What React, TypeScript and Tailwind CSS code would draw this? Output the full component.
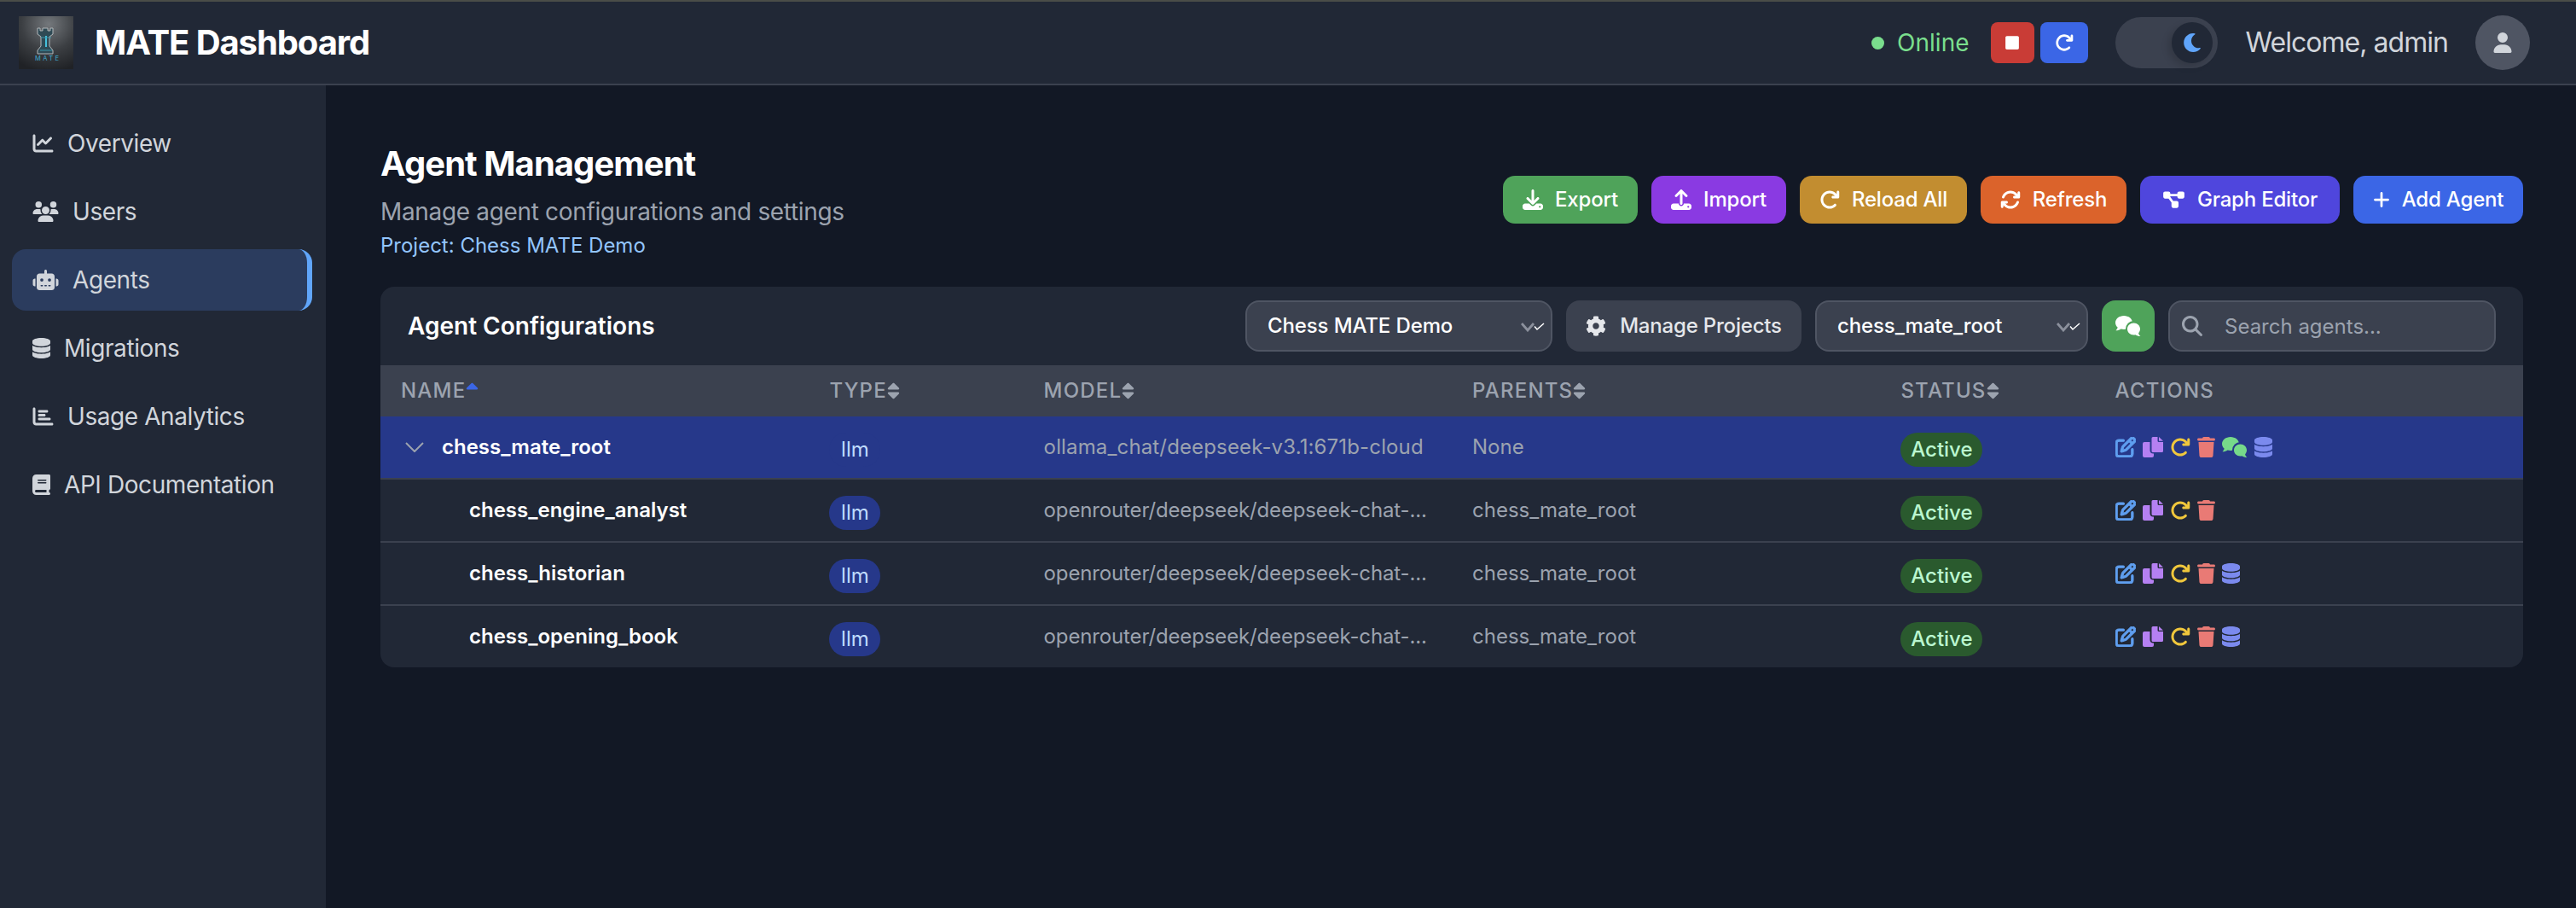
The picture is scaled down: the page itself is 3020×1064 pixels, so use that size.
import React from 'react'
import { FaCog, FaMoon, FaSort, FaSortUp, FaStop } from 'react-icons/fa'
import {
  FaChartLine, FaUsers, FaRobot, FaDatabase, FaChartBar, FaBook, FaDownload, FaUpload, FaArrowRotateRight,
  FaArrowsRotate, FaDiagramProject, FaPlus, FaMagnifyingGlass, FaRegPenToSquare, FaTrash, FaUser,
} from 'react-icons/fa6'

const navItems = [
  { label: 'Overview', icon: FaChartLine, w: 'w-[25px]' },
  { label: 'Users', icon: FaUsers, w: 'w-[31px]' },
  { label: 'Agents', icon: FaRobot, w: 'w-[31px]', active: true },
  { label: 'Migrations', icon: FaDatabase, w: 'w-[21px]' },
  { label: 'Usage Analytics', icon: FaChartBar, w: 'w-[25px]' },
  { label: 'API Documentation', icon: FaBook, w: 'w-[21px]' },
]

const headerButtons = [
  { label: 'Export', icon: FaDownload, cls: 'w-[158px] bg-[#4fa35a]', icn: 'h-[24px] w-[24px]' },
  { label: 'Import', icon: FaUpload, cls: 'w-[158px] bg-[#8a3ae2]', icn: 'h-[24px] w-[24px]' },
  { label: 'Reload All', icon: FaArrowRotateRight, cls: 'w-[196px] bg-[#c28d30]', icn: 'h-[24px] w-[24px]' },
  { label: 'Refresh', icon: FaArrowsRotate, cls: 'w-[171px] bg-[#db632b]', icn: 'h-[24px] w-[24px]' },
  { label: 'Graph Editor', icon: FaDiagramProject, cls: 'w-[234px] bg-[#4f46dd]', icn: 'h-[22px] w-[27px]' },
  { label: 'Add Agent', icon: FaPlus, cls: 'w-[199px] bg-[#3b66e6]', icn: 'h-[22px] w-[20px]' },
]

const rows = [
  { name: 'chess_mate_root', model: 'ollama_chat/deepseek-v3.1:671b-cloud', parents: 'None', root: true, chat: true, db: true },
  { name: 'chess_engine_analyst', model: 'openrouter/deepseek/deepseek-chat-...', parents: 'chess_mate_root' },
  { name: 'chess_historian', model: 'openrouter/deepseek/deepseek-chat-...', parents: 'chess_mate_root', db: true },
  { name: 'chess_opening_book', model: 'openrouter/deepseek/deepseek-chat-...', parents: 'chess_mate_root', db: true, last: true },
]

const columns = ['Name', 'Type', 'Model', 'Parents', 'Status', 'Actions']

function Logo() {
  return (
    <svg viewBox="0 0 64 62" className="h-[62px] w-[64px] shrink-0">
      <defs>
        <radialGradient id="logoBg" cx="0.55" cy="0.15" r="0.9">
          <stop offset="0" stopColor="#74787c" />
          <stop offset="0.55" stopColor="#3c3f43" />
          <stop offset="1" stopColor="#202226" />
        </radialGradient>
      </defs>
      <rect width="64" height="62" fill="url(#logoBg)" />
      <path
        d="M22 14h3v3h3v-3h6v3h3v-3h3v7l-4 3v11l4 5v4H22v-4l4-5V24l-4-3z"
        fill="#2f4a55"
        stroke="#b4b8bb"
        strokeWidth="1"
      />
      <path d="M32 23v13" stroke="#45c1dc" strokeWidth="2" />
      <path d="M26 25h12M25 40h14" stroke="#3b97ad" strokeWidth="1" />
      <text x="33" y="52" textAnchor="middle" fontSize="7.5" textLength="28" fontFamily="Inter, sans-serif" fill="#3fa9cf">MATE</text>
    </svg>
  )
}

function ChatIcon({ className }: { className: string }) {
  return (
    <svg viewBox="0 0 30 24" className={className} fill="currentColor">
      <mask id="chatGap">
        <rect width="30" height="24" fill="#fff" />
        <circle cx="21.5" cy="15.5" r="9.5" fill="#000" />
      </mask>
      <path mask="url(#chatGap)" d="M10 0c5.5 0 10 3.6 10 8s-4.5 8-10 8c-1.2 0-2.400-.2-3.500-.5C5 16.600 3 17.300.5 17.300c1.300-1.200 2-2.500 2.100-3.700C.9 12.200 0 10.200 0 8c0-4.400 4.500-8 10-8z" />
      <path d="M21.500 8.500c4.200 0 7.500 3.100 7.500 7 0 1.800-.7 3.400-1.900 4.700.2 1.300.9 2.700 2.400 3.800-2.500 0-4.600-.7-6.100-1.800-.6.200-1.200.3-1.900.3-4.200 0-7.500-3.100-7.500-7s3.300-7 7.500-7z" />
    </svg>
  )
}

function CopyIcon({ className }: { className: string }) {
  return (
    <svg viewBox="0 0 24 24" className={className} fill="currentColor">
      <path d="M12 0h5.500v4.500A1.500 1.500 0 0 0 19 6h5v10.500a1.500 1.500 0 0 1-1.500 1.500H12a1.500 1.500 0 0 1-1.500-1.500v-15A1.500 1.500 0 0 1 12 0z" />
      <path d="M19 0l5 4.800h-5z" />
      <path d="M2 6h6.500v9.500A4 4 0 0 0 12.500 19.500h.5V22a2 2 0 0 1-2 2H2a2 2 0 0 1-2-2V8a2 2 0 0 1 2-2z" />
    </svg>
  )
}

function DoubleChevron() {
  return (
    <svg viewBox="0 0 28 11" className="pointer-events-none absolute right-[9px] top-[26px] h-[11px] w-[28px]" fill="none">
      <path d="M1 1l7 8 7-8" stroke="#8b909c" strokeWidth="2.800" />
      <path d="M16 4.500l3 3.500 8-7" stroke="#ffffff" strokeWidth="1.500" />
    </svg>
  )
}

function Select({ value, className }: { value: string; className: string }) {
  return (
    <div className={`relative h-[60px] ${className}`}>
      <select className="h-full w-full appearance-none rounded-[16px] border-2 border-[#4f5563] bg-[#3b414f] pl-[24px] text-[24px] font-medium tracking-[-0.005em] text-white outline-none">
        <option>{value}</option>
      </select>
      <DoubleChevron />
    </div>
  )
}

export default function App() {
  return (
    <div className="flex min-h-screen flex-col bg-[#121825] font-['Inter',sans-serif]">
      {/* Top bar */}
      <header className="flex h-[100px] items-center justify-between border-t-2 border-b-2 border-t-[#4a4d48] border-b-[#3b414f] bg-[#212836] pl-[22px] pr-[54px]">
        <div className="flex items-center gap-[25px]">
          <Logo />
          <h1 className="text-[40px] font-bold leading-none tracking-[-0.027em] text-white">MATE Dashboard</h1>
        </div>
        <div className="flex items-center">
          <span className="h-[15px] w-[15px] rounded-full bg-[#7ade8d]" />
          <span className="ml-[15px] text-[28px] text-[#7ade8d]">Online</span>
          <button className="ml-[25px] flex h-[48px] w-[51px] items-center justify-center rounded-[8px] bg-[#c93c36] text-white">
            <FaStop className="h-[18px] w-[18px]" />
          </button>
          <button className="ml-[7px] flex h-[48px] w-[56px] items-center justify-center rounded-[8px] bg-[#3b66e6] text-white">
            <FaArrowRotateRight className="h-[22px] w-[22px]" />
          </button>
          <div className="ml-[32px] flex h-[60px] w-[120px] items-center justify-end rounded-full bg-[#3b414f] pr-[6px]">
            <span className="flex h-[48px] w-[48px] items-center justify-center rounded-full bg-[#212836] text-[#60a5fa] shadow-[-4px_4px_8px_rgba(0,0,0,0.15)]">
              <FaMoon className="h-[22px] w-[22px]" />
            </span>
          </div>
          <span className="ml-[33px] text-[32px] tracking-[-0.03em] text-[#d1d5db]">Welcome, admin</span>
          <span className="ml-[32px] flex h-[64px] w-[64px] items-center justify-center rounded-full bg-[#4f5563] text-[#d1d5db]">
            <FaUser className="h-[24px] w-[24px]" />
          </span>
        </div>
      </header>

      <div className="flex flex-1">
        {/* Sidebar */}
        <nav className="flex w-[382px] shrink-0 flex-col gap-[8px] bg-[#212836] pl-[14px] pr-[16px] pt-[32px]">
          {navItems.map((item) => {
            const Icon = item.icon
            return (
              <a
                key={item.label}
                className={`flex h-[72px] items-center gap-[16px] rounded-[16px] pl-[24px] text-[28px] tracking-[-0.015em] text-[#d1d5db] ${
                  item.active ? 'border-r-[6px] border-[#60a5fa] bg-[#2b3c5e]' : ''
                }`}
              >
                <Icon className={`h-[24px] ${item.w} shrink-0`} />
                {item.label}
              </a>
            )
          })}
        </nav>

        {/* Main content */}
        <main className="flex-1 pl-[64px] pr-[62px] pt-[64px]">
          <div className="mb-[32px] flex items-center justify-between">
            <div>
              <h2 className="text-[40px] font-bold leading-[56px] tracking-[-0.024em] text-white">Agent Management</h2>
              <p className="mt-[8px] text-[28px] leading-[40px] tracking-[-0.012em] text-[#9ca3af]">Manage agent configurations and settings</p>
              <p className="mt-[4px] text-[24px] leading-[32px] text-[#93c5fd]">Project: Chess MATE Demo</p>
            </div>
            <div className="flex gap-[16px]">
              {headerButtons.map((btn) => {
                const Icon = btn.icon
                return (
                  <button
                    key={btn.label}
                    className={`flex h-[56px] items-center justify-center gap-[14px] rounded-[14px] text-[24px] font-medium tracking-[-0.008em] text-white ${btn.cls}`}
                  >
                    <Icon className={btn.icn} />
                    {btn.label}
                  </button>
                )
              })}
            </div>
          </div>

          <section className="overflow-hidden rounded-[16px] bg-[#212836]">
            <div className="flex h-[92px] items-center justify-between px-[32px]">
              <h3 className="text-[28px] font-semibold text-white">Agent Configurations</h3>
              <div className="flex items-center gap-[16px]">
                <Select value="Chess MATE Demo" className="w-[360px]" />
                <button className="flex h-[60px] w-[276px] items-center justify-center gap-[16px] rounded-[16px] bg-[#3b414f] text-[24px] font-medium tracking-[-0.008em] text-[#e5e7eb]">
                  <FaCog className="h-[24px] w-[24px]" />
                  Manage Projects
                </button>
                <Select value="chess_mate_root" className="w-[320px]" />
                <button className="flex h-[60px] w-[62px] items-center justify-center rounded-[16px] bg-[#4fa35a] text-white">
                  <ChatIcon className="h-[24px] w-[30px]" />
                </button>
                <div className="relative h-[60px] w-[384px]">
                  <FaMagnifyingGlass className="absolute left-[16px] top-[18px] h-[24px] w-[24px] text-[#9ca3af]" />
                  <input
                    placeholder="Search agents..."
                    className="h-full w-full rounded-[16px] border-2 border-[#4f5563] bg-[#3b414f] pl-[64px] text-[24px] text-white outline-none placeholder:text-[#9ca3af]"
                  />
                </div>
              </div>
            </div>

            <div className="grid h-[60px] grid-cols-[2fr_1fr_2fr_2fr_1fr_2fr] items-center bg-[#3b414f]">
              {columns.map((col) => (
                <div key={col} className="flex items-center pl-[24px] text-[24px] font-medium uppercase tracking-[0.05em] text-[#9ca3af]">
                  {col}
                  {col === 'Name' && <FaSortUp className="h-[24px] w-[15px] text-[#3b66e6]" />}
                  {col !== 'Name' && col !== 'Actions' && <FaSort className="h-[24px] w-[15px]" />}
                </div>
              ))}
            </div>

            {rows.map((row) => (
              <div
                key={row.name}
                className={`grid grid-cols-[2fr_1fr_2fr_2fr_1fr_2fr] items-center ${row.last ? 'h-[72px]' : 'h-[74px] border-b-2 border-[#3b414f]'} ${
                  row.root ? 'bg-[#26388a]' : ''
                }`}
              >
                <div className={`flex items-center text-[24px] font-semibold text-white ${row.root ? 'pl-[29px]' : 'pl-[104px]'}`}>
                  {row.root && (
                    <svg viewBox="0 0 22 12" className="mr-[21px] h-[12px] w-[22px]" fill="none">
                      <path d="M1 1l10 10L21 1" stroke="#9ca3af" strokeWidth="2" />
                    </svg>
                  )}
                  {row.name}
                </div>
                <div className="pl-[24px]">
                  <span className="mt-[6px] inline-flex h-[40px] w-[60px] items-center justify-center rounded-full bg-[#26388a] text-[24px] text-[#bfdbfe]">llm</span>
                </div>
                <div className={`truncate pl-[24px] text-[24px] text-[#9ca3af] ${row.root ? 'tracking-[0.006em]' : 'tracking-[-0.006em]'}`}>{row.model}</div>
                <div className="pl-[24px] text-[24px] text-[#9ca3af]">{row.parents}</div>
                <div className="pl-[24px]">
                  <span className="mt-[6px] inline-flex h-[40px] w-[96px] items-center justify-center rounded-full bg-[#2a5a2e] text-[24px] font-medium text-[#bbf7d0]">Active</span>
                </div>
                <div className="flex items-center gap-[8px] pl-[24px]">
                  <FaRegPenToSquare strokeWidth={22} className="h-[24px] w-[24px] text-[#5f9ff0]" />
                  <CopyIcon className="h-[24px] w-[24px] text-[#b580f2]" />
                  <FaArrowRotateRight className="h-[24px] w-[24px] text-[#f0c73c]" />
                  <FaTrash className="h-[24px] w-[21px] text-[#e97a75]" />
                  {row.chat && <ChatIcon className="h-[24px] w-[30px] text-[#76d98a]" />}
                  {row.db && <FaDatabase className="h-[24px] w-[21px] text-[#7b8aee]" />}
                </div>
              </div>
            ))}
          </section>
        </main>
      </div>
    </div>
  )
}
